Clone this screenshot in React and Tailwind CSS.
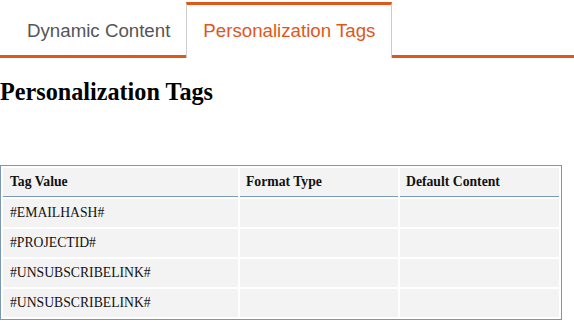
const rows = ['#EMAILHASH#', '#PROJECTID#', '#UNSUBSCRIBELINK#', '#UNSUBSCRIBELINK#']

export default function App() {
    return (
        <div className="w-[574px] h-[336px] bg-white overflow-hidden">
            <div className="pt-[2px]">
                <div className="flex border-b-[3px] border-[#e0571b] font-['Liberation_Sans',Arial,sans-serif] text-[18.7px] leading-[21px]">
                    <div className="ml-[11px] px-4 h-[53px] flex items-center pt-[4px] text-[#555555]">
                        Dynamic Content
                    </div>
                    <div className="-mb-[3px] h-[56px] px-4 flex items-center pb-[2px] border-t-[3px] border-x border-t-[#e0571b] border-x-[#cccccc] bg-white text-[#e0571b]">
                        Personalization Tags
                    </div>
                </div>
            </div>

            <h2 className="mt-[20px] font-['Liberation_Serif','Times_New_Roman',serif] font-bold text-[24.2px] leading-[27px] text-black">
                Personalization Tags
            </h2>

            <table className="mt-[60px] w-[562px] border border-[#7b98b2] border-separate border-spacing-[2px] font-['Liberation_Serif','Times_New_Roman',serif] text-[13.7px] text-[#111111]">
                <thead>
                    <tr>
                        <th className="w-[235px] h-[29px] pl-[7px] text-left font-bold bg-[#f3f3f3] border-b border-[#7b9cb8]">Tag Value</th>
                        <th className="w-[158px] h-[29px] pl-[6px] text-left font-bold bg-[#f3f3f3] border-b border-[#7b9cb8]">Format Type</th>
                        <th className="h-[29px] pl-[6px] text-left font-bold bg-[#f3f3f3] border-b border-[#7b9cb8]">Default Content</th>
                    </tr>
                </thead>
                <tbody>
                    {rows.map((tag, i) => (
                        <tr key={i}>
                            <td className="h-[28px] pl-[7px] bg-[#f3f3f3]">{tag}</td>
                            <td className="h-[28px] bg-[#f3f3f3]"></td>
                            <td className="h-[28px] bg-[#f3f3f3]"></td>
                        </tr>
                    ))}
                </tbody>
            </table>
        </div>
    )
}
